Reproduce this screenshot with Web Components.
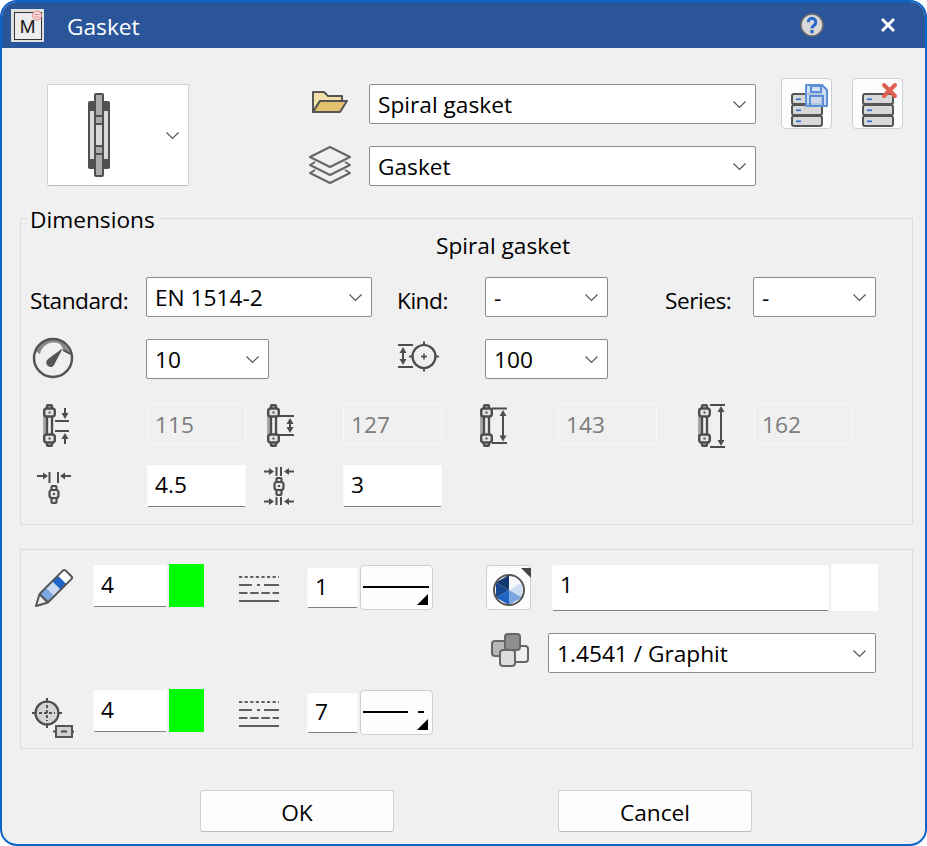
<!DOCTYPE html>
<html lang="en">
<head>
<meta charset="utf-8">
<title>Gasket</title>
<style>
  html, body { margin: 0; background: #fff; }
  body { font-family: "Open Sans", "Liberation Sans", sans-serif; }
</style>
</head>
<body>
<gasket-dialog></gasket-dialog>
<script>
const INK = '#4d4d4d';

const line = (x1, y1, x2, y2, w = 2, c = INK) =>
  `<line x1="${x1}" y1="${y1}" x2="${x2}" y2="${y2}" stroke="${c}" stroke-width="${w}"/>`;
const tri = (pts, c = INK) => `<polygon points="${pts}" fill="${c}"/>`;
const arrowDown = (x, y) => tri(`${x - 3.5},${y - 6} ${x + 3.5},${y - 6} ${x},${y}`);
const arrowUp = (x, y) => tri(`${x - 3.5},${y + 6} ${x + 3.5},${y + 6} ${x},${y}`);
const arrowRight = (x, y) => tri(`${x - 5},${y - 3.5} ${x - 5},${y + 3.5} ${x},${y}`);
const arrowLeft = (x, y) => tri(`${x + 5},${y - 3.5} ${x + 5},${y + 3.5} ${x},${y}`);

// the side view of a flange, used by all the diameter icons
const flange = `
  <rect x="0" y="11" width="4" height="21" fill="#a8a8a8"/>
  ${line(4, 11, 4, 32, 2.4)}${line(9, 11, 9, 32, 2.4)}
  <g fill="#e4e4e4" stroke="${INK}" stroke-width="2.4">
    <rect x="4" y="1.2" width="5" height="4" rx="1"/>
    <rect x="1.2" y="4.5" width="10.6" height="8" rx="2.5"/>
    <rect x="4" y="37.8" width="5" height="4" rx="1"/>
    <rect x="1.2" y="30.5" width="10.6" height="8" rx="2.5"/>
  </g>
  <rect x="5.5" y="7.5" width="2" height="2" fill="${INK}"/>
  <rect x="5.5" y="33.5" width="2" height="2" fill="${INK}"/>`;

const nut = (cx, y) => `
  <g fill="#e4e4e4" stroke="${INK}" stroke-width="2.2">
    <rect x="${cx - 2.5}" y="${y}" width="5" height="17" rx="1"/>
    <rect x="${cx - 4.5}" y="${y + 4}" width="9" height="8" rx="2.5"/>
  </g>
  <rect x="${cx - 1}" y="${y + 7}" width="2" height="2" fill="${INK}"/>`;

const crosshair = (cx, cy, r, fill, inner) => `
  <circle cx="${cx}" cy="${cy}" r="${r}" fill="${fill}" stroke="${INK}" stroke-width="2.2"/>
  ${line(cx, cy - r - 3.5, cx, cy - r + 1)}${line(cx, cy + r - 1, cx, cy + r + 3.5)}
  ${line(cx - r - 3.5, cy, cx - r + 1, cy)}${line(cx + r - 1, cy, cx + r + 3.5, cy)}
  ${inner}`;

const stack = (x, y) => [0, 11, 22].map(d => `
  <rect x="${x + 1}" y="${y + d + 1}" width="30" height="10" rx="2" fill="#d8d8d8" stroke="#555" stroke-width="2"/>
  <rect x="${x + 5}" y="${y + d + 5.5}" width="5" height="1.6" fill="#2a6bc9"/>`).join('');

const dash = (y, arr) => line(0, y, 40, y, 2, '#5f5f5f').replace('/>', ` stroke-dasharray="${arr}"/>`);
const dashes = `
  ${dash(1, '3.2 2.4')}
  ${line(0, 9, 13, 9, 2, '#5f5f5f')}${line(18, 9, 21, 9, 2, '#5f5f5f')}${line(25, 9, 40, 9, 2, '#5f5f5f')}
  ${dash(17, '8.5 2.7')}
  ${line(0, 25, 40, 25, 2, '#5f5f5f')}`;

const ICONS = {
  gasket: [22, 84, `
    <rect x="0" y="8" width="22" height="68" rx="2" fill="#505050"/>
    <rect x="6" y="0" width="10" height="84" rx="2" fill="#505050"/>
    <rect x="2" y="18" width="4" height="48" fill="#d8d8d8"/>
    <rect x="16" y="18" width="4" height="48" fill="#d8d8d8"/>
    <rect x="8" y="2" width="6" height="20" fill="#aaa"/>
    <rect x="8" y="24" width="6" height="6" fill="#aaa"/>
    <rect x="8" y="32" width="6" height="20" fill="#d8d8d8"/>
    <rect x="8" y="54" width="6" height="6" fill="#aaa"/>
    <rect x="8" y="62" width="6" height="20" fill="#aaa"/>`],
  folder: [36, 23, `
    <path d="M1 22V2h11l4 4h14v5H8L1 22z" fill="#f3dfa8" stroke="#555" stroke-width="2" stroke-linejoin="round"/>
    <path d="M1 22l7-11h27l-7 11z" fill="#e2c06e" stroke="#555" stroke-width="2" stroke-linejoin="round"/>`],
  layers: [42, 38, `
    <g fill="none" stroke="#666" stroke-width="2" stroke-linejoin="round">
      <path d="M21 1l20 10-20 10L1 11z"/>
      <path d="M6 16l-5 3 20 10 20-10-5-3"/>
      <path d="M6 24l-5 3 20 10 20-10-5-3"/>
    </g>`],
  gauge: [42, 42, `
    <path d="M3 14A19.5 19.5 0 0 1 30 4L38 15 32 13 28 7A14 14 0 0 0 8 17z" fill="#8a8a8a"/>
    <circle cx="21" cy="21" r="19" fill="none" stroke="#555" stroke-width="2.5"/>
    <path d="M31 11L23 26a4.4 4.4 0 1 1-7-4z" fill="#555"/>
    ${line(31, 13, 39, 17, 2, '#555')}`],
  spread: [42, 32, `
    ${line(0, 3, 15, 3)}${line(0, 25, 15, 25)}${line(5, 8, 5, 20)}
    ${arrowUp(5, 5)}${arrowDown(5, 23)}
    ${crosshair(26, 14.5, 11.5, 'none', line(23, 14.5, 29, 14.5, 1.6) + line(26, 11.5, 26, 17.5, 1.6))}`],
  inner: [28, 44, `${flange}
    ${line(12, 17, 26, 17)}${line(12, 27, 26, 27)}
    ${line(22, 4, 22, 10)}${arrowDown(22, 15)}${line(22, 34, 22, 40)}${arrowUp(22, 29)}`],
  outer: [28, 44, `${flange}
    ${line(12, 12, 27, 12)}${line(12, 31, 27, 31)}
    ${line(23, 18, 23, 25)}${arrowUp(23, 14)}${arrowDown(23, 29)}`],
  bore: [28, 44, `${flange}
    ${line(12, 4.5, 27, 4.5)}${line(12, 39, 27, 39)}
    ${line(23, 10, 23, 34)}${arrowUp(23, 6)}${arrowDown(23, 37.5)}`],
  diameter: [28, 44, `${flange}
    ${line(12, 1, 27, 1)}${line(12, 43, 27, 43)}
    ${line(23, 6, 23, 38)}${arrowUp(23, 2)}${arrowDown(23, 42)}`],
  thick: [34, 33, `
    ${line(0, 4, 7, 4)}${arrowRight(11, 4)}${line(27, 4, 34, 4)}${arrowLeft(23, 4)}
    ${line(12.5, 0, 12.5, 11)}${line(21, 0, 21, 11)}${nut(17, 14)}`],
  thick2: [30, 38, `
    ${line(0, 4.5, 6, 4.5)}${arrowRight(10, 4.5)}${line(24, 4.5, 30, 4.5)}${arrowLeft(20, 4.5)}
    ${line(12.5, 0, 12.5, 9)}${line(17, 0, 17, 9)}
    ${nut(15, 11)}
    ${line(0, 34.5, 6, 34.5)}${arrowRight(10, 34.5)}${line(24, 34.5, 30, 34.5)}${arrowLeft(20, 34.5)}
    ${line(12.5, 30, 12.5, 38)}${line(17, 30, 17, 38)}`],
  pencil: [38, 39, `
    <g transform="translate(1 38) rotate(-45)" stroke="#555" stroke-width="2" stroke-linejoin="round">
      <path d="M0 0L11-6V6z" fill="#eee"/>
      <rect x="11" y="-6" width="9" height="12" fill="#7ba6e0" stroke="none"/>
      <rect x="20" y="-6" width="9" height="12" fill="#c7daf5" stroke="none"/>
      <rect x="29" y="-6" width="8" height="12" fill="#1f63c5" stroke="none"/>
      <rect x="37" y="-6" width="9" height="12" fill="#fff" stroke="none"/>
      <rect x="11" y="-6" width="35" height="12" rx="2" fill="none"/>
    </g>`],
  dashes: [40, 27, dashes],
  target: [42, 40, `
    ${crosshair(15, 15, 11.5, '#d5d5d5',
      line(15, 7, 15, 23, 1.8).replace('/>', ' stroke-dasharray="3 2"/>') +
      line(7, 15, 23, 15, 1.8).replace('/>', ' stroke-dasharray="3 2"/>'))}
    <rect x="24" y="28" width="16" height="11" fill="#cfcfcf" stroke="#555" stroke-width="2"/>
    ${line(29, 33.5, 35, 33.5)}${line(21, 33.5, 24, 33.5)}${line(40, 33.5, 42, 33.5)}`],
  material: [38, 34, `
    <g stroke="#666" stroke-width="2">
      <rect x="23" y="13" width="14" height="16" rx="3" fill="#f0f0f0"/>
      <rect x="1" y="8" width="18" height="15" rx="3" fill="#b8b8b8"/>
      <rect x="14" y="1" width="15" height="16" rx="3" fill="#8e8e8e"/>
      <rect x="9" y="17" width="15" height="16" rx="3" fill="#ddd"/>
    </g>`],
  save: [37, 48, `
    ${stack(0, 15)}
    <path d="M15 7h16l5 5v16H15z" fill="#c9d9f2" fill-opacity=".85" stroke="#5b8fd8" stroke-width="2" stroke-linejoin="round"/>
    <rect x="20" y="8" width="10" height="6" fill="none" stroke="#5b8fd8" stroke-width="2"/>
    <rect x="19" y="18" width="13" height="10" fill="none" stroke="#5b8fd8" stroke-width="2"/>`],
  remove: [38, 48, `
    ${stack(0, 15)}
    <g stroke="#df5f4e" stroke-width="4" stroke-linecap="round">
      <line x1="22" y1="7" x2="33" y2="18"/><line x1="33" y1="7" x2="22" y2="18"/>
    </g>`],
  palette: [32, 32, `
    <path d="M16 16V1L29 8.5z" fill="#f4f7fc"/>
    <path d="M16 16L29 8.5V23.5z" fill="#cfddf4"/>
    <path d="M16 16L29 23.5 16 31z" fill="#7ba6e0"/>
    <path d="M16 16V31L3 23.5z" fill="#1f63c5"/>
    <path d="M16 16L3 23.5V8.5z" fill="#17478f"/>
    <path d="M16 16L3 8.5 16 1z" fill="#12366e"/>
    <circle cx="16" cy="16" r="15" fill="none" stroke="#555" stroke-width="2"/>`],
  help: [24, 24, `
    <circle cx="12" cy="12" r="11" fill="#d8d8d8" stroke="#6a6a6a" stroke-width="1.5"/>
    <path d="M8.2 9.2a3.8 3.8 0 1 1 5.8 3.2c-1.5.9-2 1.5-2 3.2" fill="none" stroke="#2a66c4" stroke-width="3"/>
    <rect x="10.4" y="17" width="3.2" height="3.2" fill="#2a66c4"/>`],
  close: [16, 16, `
    <g stroke="#fff" stroke-width="2.8"><line x1="2" y1="2" x2="14" y2="14"/><line x1="14" y1="2" x2="2" y2="14"/></g>`],
  chevron: [13, 7, `<path d="M.5.5l6 6 6-6" fill="none" stroke="#555" stroke-width="1.2"/>`],
  app: [33, 33, `
    <rect width="33" height="33" fill="#e0e0e0"/>
    <rect x="3.5" y="3.5" width="27" height="27" fill="#ececec" stroke="#333"/>
    <text x="16.5" y="24" font-family="Roboto, sans-serif" font-size="18" text-anchor="middle" fill="#222">M</text>
    <circle cx="26" cy="6.5" r="4.5" fill="#f6dcdc" stroke="#e38a8a"/>
    ${line(23.5, 5.5, 28.5, 5.5, 1, '#e38a8a')}${line(23.5, 8, 28.5, 8, 1, '#e38a8a')}`],
};

class MIcon extends HTMLElement {
  connectedCallback() {
    const [w, h, body] = ICONS[this.getAttribute('name')];
    this.attachShadow({ mode: 'open' }).innerHTML = `
      <style>
        :host { display: block; width: ${w}px; height: ${h}px; flex: none; }
        svg { display: block; overflow: visible; }
      </style>
      <svg width="${w}" height="${h}" viewBox="0 0 ${w} ${h}">${body}</svg>`;
  }
}
customElements.define('m-icon', MIcon);

class MCombo extends HTMLElement {
  constructor() {
    super();
    this.attachShadow({ mode: 'open' }).innerHTML = `
      <style>
        :host {
          display: flex;
          align-items: center;
          box-sizing: border-box;
          height: 40px;
          padding: 0 9px 0 8px;
          background: #fff;
          border: 1px solid #8b8b8b;
          border-radius: 2px;
          color: #000;
        }
        .text { flex: 1; white-space: nowrap; }
      </style>
      <span class="text"><slot></slot></span>
      <m-icon name="chevron"></m-icon>`;
  }
}
customElements.define('m-combo', MCombo);

class MField extends HTMLElement {
  constructor() {
    super();
    this.attachShadow({ mode: 'open' }).innerHTML = `
      <style>
        :host {
          display: flex;
          align-items: center;
          box-sizing: border-box;
          height: 42px;
          padding: 0 8px 3px 7px;
          background: #fff;
          border: 1px solid #fcfcfc;
          border-bottom: 1px solid #808080;
          border-radius: 2px;
          color: #000;
          white-space: nowrap;
        }
        :host([disabled]) {
          height: 40px;
          padding-bottom: 0;
          background: #f0f0f0;
          border: 1px solid #fafafa;
          color: #7c7c7c;
        }
      </style>
      <slot></slot>`;
  }
}
customElements.define('m-field', MField);

class MGroup extends HTMLElement {
  constructor() {
    super();
    this.attachShadow({ mode: 'open' }).innerHTML = `
      <style>
        :host {
          display: block;
          position: relative;
          box-sizing: border-box;
          width: 893px;
          margin-left: 18px;
          border: 1px solid #dcdcdc;
        }
        .legend {
          position: absolute;
          left: 6px;
          top: -13px;
          padding: 0 3px;
          background: #f0f0f0;
          line-height: 27px;
        }
        .legend:empty { display: none; }
      </style>
      <div class="legend">${this.getAttribute('legend') || ''}</div>
      <slot></slot>`;
  }
}
customElements.define('m-group', MGroup);

class MToolButton extends HTMLElement {
  constructor() {
    super();
    this.attachShadow({ mode: 'open' }).innerHTML = `
      <style>
        :host {
          display: block;
          position: relative;
          box-sizing: border-box;
          flex: none;
          background: #fdfdfd;
          border: 1px solid #cfcfcf;
          border-radius: 4px;
        }
      </style>
      <slot></slot>`;
  }
}
customElements.define('m-tool-button', MToolButton);

// button showing a line type, with the little popup triangle in its corner
class MLineButton extends HTMLElement {
  connectedCallback() {
    const gap = this.hasAttribute('gap');
    const stroke = gap
      ? line(2, 21, 47, 21, 2, '#000') + line(57, 21, 63, 21, 2, '#000')
      : line(2, 21, 68, 21, 2, '#000');
    this.attachShadow({ mode: 'open' }).innerHTML = `
      <style>
        :host {
          display: block;
          box-sizing: border-box;
          width: 73px;
          height: 45px;
          background: #fdfdfd;
          border: 1px solid #cfcfcf;
          border-radius: 4px;
        }
        svg { display: block; }
      </style>
      <svg width="71" height="43" viewBox="0 0 71 43">
        ${stroke}
        ${tri('67,28 67,39 56,39', '#000')}
      </svg>`;
  }
}
customElements.define('m-line-button', MLineButton);

class MButton extends HTMLElement {
  constructor() {
    super();
    this.attachShadow({ mode: 'open' }).innerHTML = `
      <style>
        :host {
          display: flex;
          align-items: center;
          justify-content: center;
          box-sizing: border-box;
          width: 194px;
          height: 42px;
          padding-top: 3px;
          background: #fdfdfd;
          border: 1px solid #d0d0d0;
          border-bottom-color: #bdbdbd;
          border-radius: 3px;
          color: #000;
        }
      </style>
      <slot></slot>`;
  }
}
customElements.define('m-button', MButton);

class MTitlebar extends HTMLElement {
  constructor() {
    super();
    this.attachShadow({ mode: 'open' }).innerHTML = `
      <style>
        :host {
          display: flex;
          align-items: center;
          height: 46px;
          padding-left: 9px;
          background: #2a5699;
          color: #fff;
        }
        .title { margin: 3px 0 0 23px; flex: 1; }
        .help { margin-right: 56px; }
        .close { margin-right: 29px; }
      </style>
      <m-icon name="app"></m-icon>
      <span class="title"><slot></slot></span>
      <m-icon class="help" name="help"></m-icon>
      <m-icon class="close" name="close"></m-icon>`;
  }
}
customElements.define('m-titlebar', MTitlebar);

class GasketDialog extends HTMLElement {
  constructor() {
    super();
    this.attachShadow({ mode: 'open' }).innerHTML = `
      <style>
        :host {
          display: block;
          box-sizing: border-box;
          width: 927px;
          height: 846px;
          overflow: hidden;
          background: #f0f0f0;
          border: 2px solid #0f64c8;
          border-radius: 17px;
          font-family: "Open Sans", "Liberation Sans", sans-serif;
          font-size: 22.7px;
          color: #000;
        }
        .top { display: flex; margin: 30px 0 0 45px; }
        .picker {
          display: flex;
          align-items: center;
          box-sizing: border-box;
          width: 142px;
          height: 102px;
          margin: 6px 123px 0 0;
          padding: 0 9px 0 40px;
          background: #fff;
          border: 1px solid #d0d0d0;
          border-bottom-color: #bdbdbd;
          border-radius: 2px;
        }
        .picker m-icon[name=chevron] { margin-left: auto; }
        .top-rows { display: grid; grid-template-columns: 57px 387px 25px 51px 20px 51px; grid-template-rows: 51px 40px; row-gap: 17px; }
        .r1 { margin-top: 6px; }
        .save, .del { width: 51px; height: 51px; padding: 0; }
        .save m-icon { margin: -1px 0 0 9px; }
        .del m-icon { margin: -1px 0 0 9px; }
        .caption { text-align: center; margin: 12px 0 0 73px; height: 46px; line-height: 30px; }
        .row { display: grid; align-items: center; padding-left: 9px; }
        .row > m-icon { align-self: start; }
        .a { grid-template-columns: 116px 226px 25px 88px 123px 57px 88px 123px; grid-template-rows: 40px; }
        .a > span { padding-top: 6px; letter-spacing: -.5px; }
        .b { grid-template-columns: 116px 123px 129px 87px 123px; grid-template-rows: 40px; margin-top: 22px; }
        .c { grid-template-columns: 117px 99px 97px 99px 116px 99px 97px 99px; }
        .c3 { grid-template-rows: 40px; margin-top: 25px; }
        .c4 { grid-template-rows: 42px; margin-top: 21px; margin-bottom: 17px; }
        .props { padding: 14px 0 13px 14px; }
        .p { display: grid; align-items: start; height: 47px;
             grid-template-columns: 58px 74px 2px 35px 35px 68px 51px 2px 73px 53px 45px 21px 277px 2px 47px; }
        .p3 { height: 46px; margin-top: 16px; }
        .p2 { display: grid; align-items: start; height: 40px; margin-top: 22px; grid-template-columns: 456px 57px 328px; }
        .swatch { height: 43px; background: #00ff00; }
        .blank { height: 47px; background: #fff; }
        .f4 { margin-top: 1px; }
        .fn { margin-top: 4px; height: 40px; }
        .fw { margin-top: 1px; height: 46px; padding-bottom: 7px; }
        .lb { margin-top: 1px; }
        .pal { width: 45px; height: 45px; margin-top: 1px; }
        .pal m-icon { margin: 8px 0 0 6px; }
        .pal::after {
          content: "";
          position: absolute;
          right: -1px;
          top: 2px;
          border-style: solid;
          border-width: 0 10px 10px 0;
          border-color: transparent #444 transparent transparent;
        }
        .foot { display: flex; gap: 164px; margin: 41px 0 0 198px; }
        .group2 { margin-top: 24px; }
      </style>

      <m-titlebar>Gasket</m-titlebar>

      <div class="top">
        <div class="picker">
          <m-icon name="gasket"></m-icon>
          <m-icon name="chevron"></m-icon>
        </div>
        <div class="top-rows">
          <m-icon name="folder" style="margin:12px 0 0 0"></m-icon>
          <m-combo class="r1">Spiral gasket</m-combo>
          <span></span>
          <m-tool-button class="save"><m-icon name="save"></m-icon></m-tool-button>
          <span></span>
          <m-tool-button class="del"><m-icon name="remove"></m-icon></m-tool-button>
          <m-icon name="layers" style="margin-left:-3px"></m-icon>
          <m-combo>Gasket</m-combo>
        </div>
      </div>

      <m-group legend="Dimensions" style="margin-top:32px">
        <div class="caption">Spiral gasket</div>
        <div class="row a">
          <span>Standard:</span>
          <m-combo>EN 1514-2</m-combo>
          <i></i>
          <span>Kind:</span>
          <m-combo>-</m-combo>
          <i></i>
          <span>Series:</span>
          <m-combo>-</m-combo>
        </div>
        <div class="row b">
          <m-icon name="gauge" style="margin:-2px 0 0 2px"></m-icon>
          <m-combo>10</m-combo>
          <i></i>
          <m-icon name="spread" style="margin-top:3px"></m-icon>
          <m-combo>100</m-combo>
        </div>
        <div class="row c c3">
          <m-icon name="inner" style="margin-left:13px"></m-icon>
          <m-field disabled>115</m-field>
          <m-icon name="outer" style="margin-left:21px"></m-icon>
          <m-field disabled>127</m-field>
          <m-icon name="bore" style="margin-left:38px"></m-icon>
          <m-field disabled>143</m-field>
          <m-icon name="diameter" style="margin-left:41px"></m-icon>
          <m-field disabled>162</m-field>
        </div>
        <div class="row c c4">
          <m-icon name="thick" style="margin:7px 0 0 7px"></m-icon>
          <m-field>4.5</m-field>
          <m-icon name="thick2" style="margin:2px 0 0 18px"></m-icon>
          <m-field>3</m-field>
        </div>
      </m-group>

      <m-group class="group2">
        <div class="props">
          <div class="p">
            <m-icon name="pencil" style="margin-top:4px"></m-icon>
            <m-field class="f4">4</m-field>
            <span></span>
            <div class="swatch"></div>
            <span></span>
            <m-icon name="dashes" style="margin-top:12px"></m-icon>
            <m-field class="fn">1</m-field>
            <span></span>
            <m-line-button class="lb"></m-line-button>
            <span></span>
            <m-tool-button class="pal"><m-icon name="palette"></m-icon></m-tool-button>
            <span></span>
            <m-field class="fw">1</m-field>
            <span></span>
            <div class="blank"></div>
          </div>
          <div class="p2">
            <span></span>
            <m-icon name="material"></m-icon>
            <m-combo>1.4541 / Graphit</m-combo>
          </div>
          <div class="p p3">
            <m-icon name="target" style="margin:9px 0 0 -3px"></m-icon>
            <m-field class="f4">4</m-field>
            <span></span>
            <div class="swatch"></div>
            <span></span>
            <m-icon name="dashes" style="margin-top:12px"></m-icon>
            <m-field class="fn">7</m-field>
            <span></span>
            <m-line-button class="lb" gap></m-line-button>
          </div>
        </div>
      </m-group>

      <div class="foot">
        <m-button>OK</m-button>
        <m-button>Cancel</m-button>
      </div>`;
  }
}
customElements.define('gasket-dialog', GasketDialog);
</script>
</body>
</html>
